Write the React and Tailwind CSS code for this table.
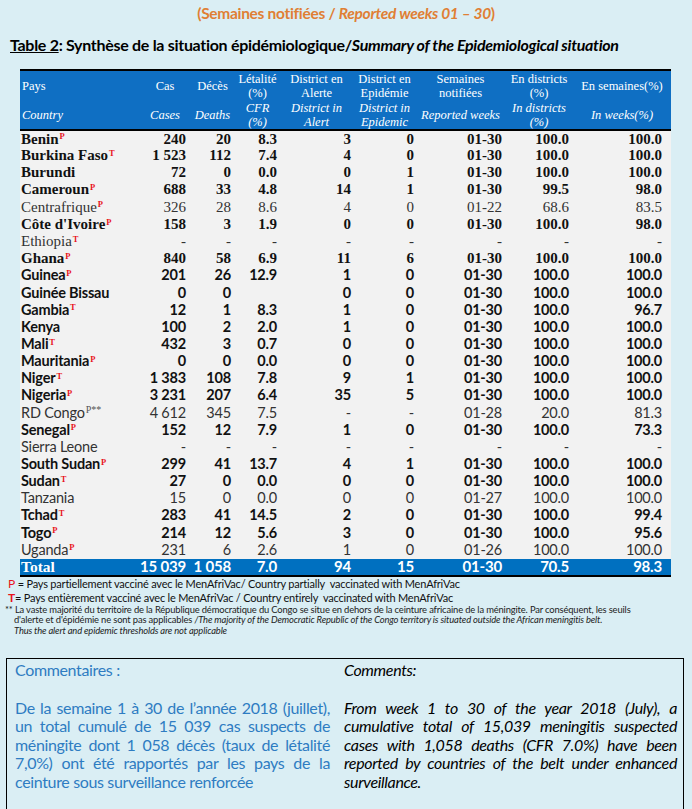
import React from "react";

const narrow = "font-['Lato','Liberation_Sans',sans-serif]";
const serif = "font-['Liberation_Serif',serif]";

// [pays, sup, bold, font, cas, deces, cfr, alerte, epidemie, semaines, districts, weeks]
const rows = [
  ["Benin", "P", true, "c", "240", "20", "8.3", "3", "0", "01-30", "100.0", "100.0"],
  ["Burkina Faso", "T", true, "c", "1 523", "112", "7.4", "4", "0", "01-30", "100.0", "100.0"],
  ["Burundi", "", true, "c", "72", "0", "0.0", "0", "1", "01-30", "100.0", "100.0"],
  ["Cameroun", "P", true, "c", "688", "33", "4.8", "14", "1", "01-30", "99.5", "98.0"],
  ["Centrafrique", "P", false, "c", "326", "28", "8.6", "4", "0", "01-22", "68.6", "83.5"],
  ["Côte d'Ivoire", "P", true, "c", "158", "3", "1.9", "0", "0", "01-30", "100.0", "98.0"],
  ["Ethiopia", "T", false, "c", "-", "-", "-", "-", "-", "-", "-", "-"],
  ["Ghana", "P", true, "c", "840", "58", "6.9", "11", "6", "01-30", "100.0", "100.0"],
  ["Guinea", "P", true, "n", "201", "26", "12.9", "1", "0", "01-30", "100.0", "100.0"],
  ["Guinée Bissau", "", true, "n", "0", "0", "", "0", "0", "01-30", "100.0", "100.0"],
  ["Gambia", "T", true, "n", "12", "1", "8.3", "1", "0", "01-30", "100.0", "96.7"],
  ["Kenya", "", true, "n", "100", "2", "2.0", "1", "0", "01-30", "100.0", "100.0"],
  ["Mali", "T", true, "n", "432", "3", "0.7", "0", "0", "01-30", "100.0", "100.0"],
  ["Mauritania", "P", true, "n", "0", "0", "0.0", "0", "0", "01-30", "100.0", "100.0"],
  ["Niger", "T", true, "n", "1 383", "108", "7.8", "9", "1", "01-30", "100.0", "100.0"],
  ["Nigeria", "P", true, "n", "3 231", "207", "6.4", "35", "5", "01-30", "100.0", "100.0"],
  ["RD Congo", "P**", false, "n", "4 612", "345", "7.5", "-", "-", "01-28", "20.0", "81.3"],
  ["Senegal", "P", true, "n", "152", "12", "7.9", "1", "0", "01-30", "100.0", "73.3"],
  ["Sierra Leone", "", false, "n", "-", "-", "-", "-", "-", "-", "-", "-"],
  ["South Sudan", "P", true, "n", "299", "41", "13.7", "4", "1", "01-30", "100.0", "100.0"],
  ["Sudan", "T", true, "n", "27", "0", "0.0", "0", "0", "01-30", "100.0", "100.0"],
  ["Tanzania", "", false, "n", "15", "0", "0.0", "0", "0", "01-27", "100.0", "100.0"],
  ["Tchad", "T", true, "n", "283", "41", "14.5", "2", "0", "01-30", "100.0", "99.4"],
  ["Togo", "P", true, "n", "214", "12", "5.6", "3", "0", "01-30", "100.0", "95.6"],
  ["Uganda", "P", false, "n", "231", "6", "2.6", "1", "0", "01-26", "100.0", "100.0"],
];

// right padding of each number column
const pads = ["pr-[4px]", "pr-[4px]", "pr-[3px]", "pr-[2px]", "pr-[2px]", "pr-[3px]", "pr-[4px]", "pr-[9px]"];

function Row({ r }) {
  const [name, sup, bold, font, ...vals] = r;
  const f = font === "c" ? `${serif} text-[15px]` : `${narrow} text-[14.5px] tracking-[-0.2px]`;
  return (
    <tr className={`h-[17.15px] leading-none ${f} ${bold ? "font-bold text-[#111]" : "font-normal text-[#333]"}`}>
      <td className="pl-[1px] whitespace-nowrap">
        {name}
        {sup && (
          <sup className={`${serif} ml-[1px] ${sup === "P**" ? "text-[#555] font-normal text-[10px] tracking-normal" : "text-[8.5px] font-bold text-[#e8141c]"}`}>
            {sup}
          </sup>
        )}
      </td>
      {vals.map((v, i) => (
        <td key={i} className={`text-right ${pads[i]}`}>{v}</td>
      ))}
    </tr>
  );
}

export default function App() {
  return (
    <div className="w-[692px] h-[809px] overflow-hidden bg-[#daeef4] text-black">
      <div className={`${narrow} pt-[4px] text-center text-[15.5px] font-bold text-[#e07f34] leading-[18px] tracking-[-0.3px]`}>
        (Semaines notifiées / <i>Reported weeks 01 – 30</i>)
      </div>

      <div className={`${narrow} mt-[14px] pl-[10px] text-[16px] font-bold leading-[18px] whitespace-nowrap tracking-[-0.3px]`}>
        <span className="underline">Table 2</span>: Synthèse de la situation épidémiologique/
        <i>Summary of the Epidemiological situation</i>
      </div>

      <table className="mt-[15px] ml-[20px] w-[651px] table-fixed border-collapse bg-[#f2f2f2]">
        <colgroup>
          <col className="w-[120px]" />
          <col className="w-[50px]" />
          <col className="w-[45px]" />
          <col className="w-[45px]" />
          <col className="w-[73px]" />
          <col className="w-[63px]" />
          <col className="w-[89px]" />
          <col className="w-[68px]" />
          <col className="w-[98px]" />
        </colgroup>
        <thead className={`${serif} bg-[#0f6fc3] text-white text-[12.5px] font-normal leading-[14px]`}>
          <tr className="border-t-2 border-black h-[30px]">
            <th className="text-left pl-[2px] font-normal">Pays</th>
            <th className="font-normal">Cas</th>
            <th className="font-normal">Décès</th>
            <th className="font-normal">Létalité<br />(%)</th>
            <th className="font-normal">District en<br />Alerte</th>
            <th className="font-normal">District en<br />Epidémie</th>
            <th className="font-normal">Semaines<br />notifiées</th>
            <th className="font-normal">En districts<br />(%)</th>
            <th className="font-normal">En semaines(%)</th>
          </tr>
          <tr className="italic border-b-2 border-black h-[30px]">
            <th className="text-left pl-[2px] font-normal">Country</th>
            <th className="font-normal">Cases</th>
            <th className="font-normal">Deaths</th>
            <th className="font-normal">CFR<br />(%)</th>
            <th className="font-normal">District in<br />Alert</th>
            <th className="font-normal">District in<br />Epidemic</th>
            <th className="font-normal whitespace-nowrap">Reported weeks</th>
            <th className="font-normal">In districts<br />(%)</th>
            <th className="font-normal">In weeks(%)</th>
          </tr>
        </thead>
        <tbody>
          {rows.map((r) => (
            <Row key={r[0]} r={r} />
          ))}
          <tr className={`h-[17px] leading-none bg-[#0070c0] text-white font-bold text-[15px] border-b-2 border-black ${narrow} tracking-[-0.2px]`}>
            <td className={`pl-[1px] ${serif} text-[15.5px] tracking-normal`}>Total</td>
            {["15 039", "1 058", "7.0", "94", "15", "01-30", "70.5", "98.3"].map((v, i) => (
              <td key={i} className={`text-right ${pads[i]}`}>{v}</td>
            ))}
          </tr>
        </tbody>
      </table>

      <div className={`${narrow} pl-[8px] text-[11px] leading-[14px] text-[#111] tracking-[-0.2px]`}>
        <div><span className="text-[#e8141c] text-[12px]">P</span> = Pays partiellement vacciné avec le MenAfriVac/ Country partially&nbsp; vaccinated with MenAfriVac</div>
        <div><span className="text-[#e8141c] text-[12px] font-bold">T</span>= Pays entièrement vacciné avec le MenAfriVac / Country entirely&nbsp; vaccinated with MenAfriVac</div>
      </div>
      <div className={`${narrow} pl-[5px] text-[9.4px] leading-[10.5px] text-[#222] tracking-[-0.15px] whitespace-nowrap`}>
        <div>
          ** La vaste majorité du territoire de la République démocratique du Congo se situe en dehors de la ceinture africaine de la méningite. Par conséquent, les seuils
        </div>
        <div className="pl-[9px]">
          d'alerte et d'épidémie ne sont pas applicables <i>/The majority of the Democratic Republic of the Congo territory is situated outside the African meningitis belt.</i>
        </div>
        <div className="pl-[9px] italic">Thus the alert and epidemic thresholds are not applicable</div>
      </div>

      <div className={`${narrow} mt-[22px] ml-[6px] w-[678px] h-[170px] border border-black pl-[8px] pr-[7px] pt-[2px]`}>
        <div className="grid grid-cols-[315px_333px] gap-x-[14px] text-[16px] leading-[18.5px] tracking-[-0.35px]">
          <div className="text-[#2e7cc2]">Commentaires :</div>
          <div className="italic">Comments:</div>
          <p className="mt-[19px] text-[#2e7cc2] text-justify">
            De la semaine 1 à 30 de l’année 2018 (juillet), un total cumulé de 15 039 cas suspects de méningite dont 1 058 décès (taux de létalité 7,0%) ont été rapportés par les pays de la ceinture sous surveillance renforcée
          </p>
          <p className="mt-[19px] italic text-justify">
            From week 1 to 30 of the year 2018 (July), a cumulative total of 15,039 meningitis suspected cases with 1,058 deaths (CFR 7.0%) have been reported by countries of the belt under enhanced surveillance.
          </p>
        </div>
      </div>
    </div>
  );
}
